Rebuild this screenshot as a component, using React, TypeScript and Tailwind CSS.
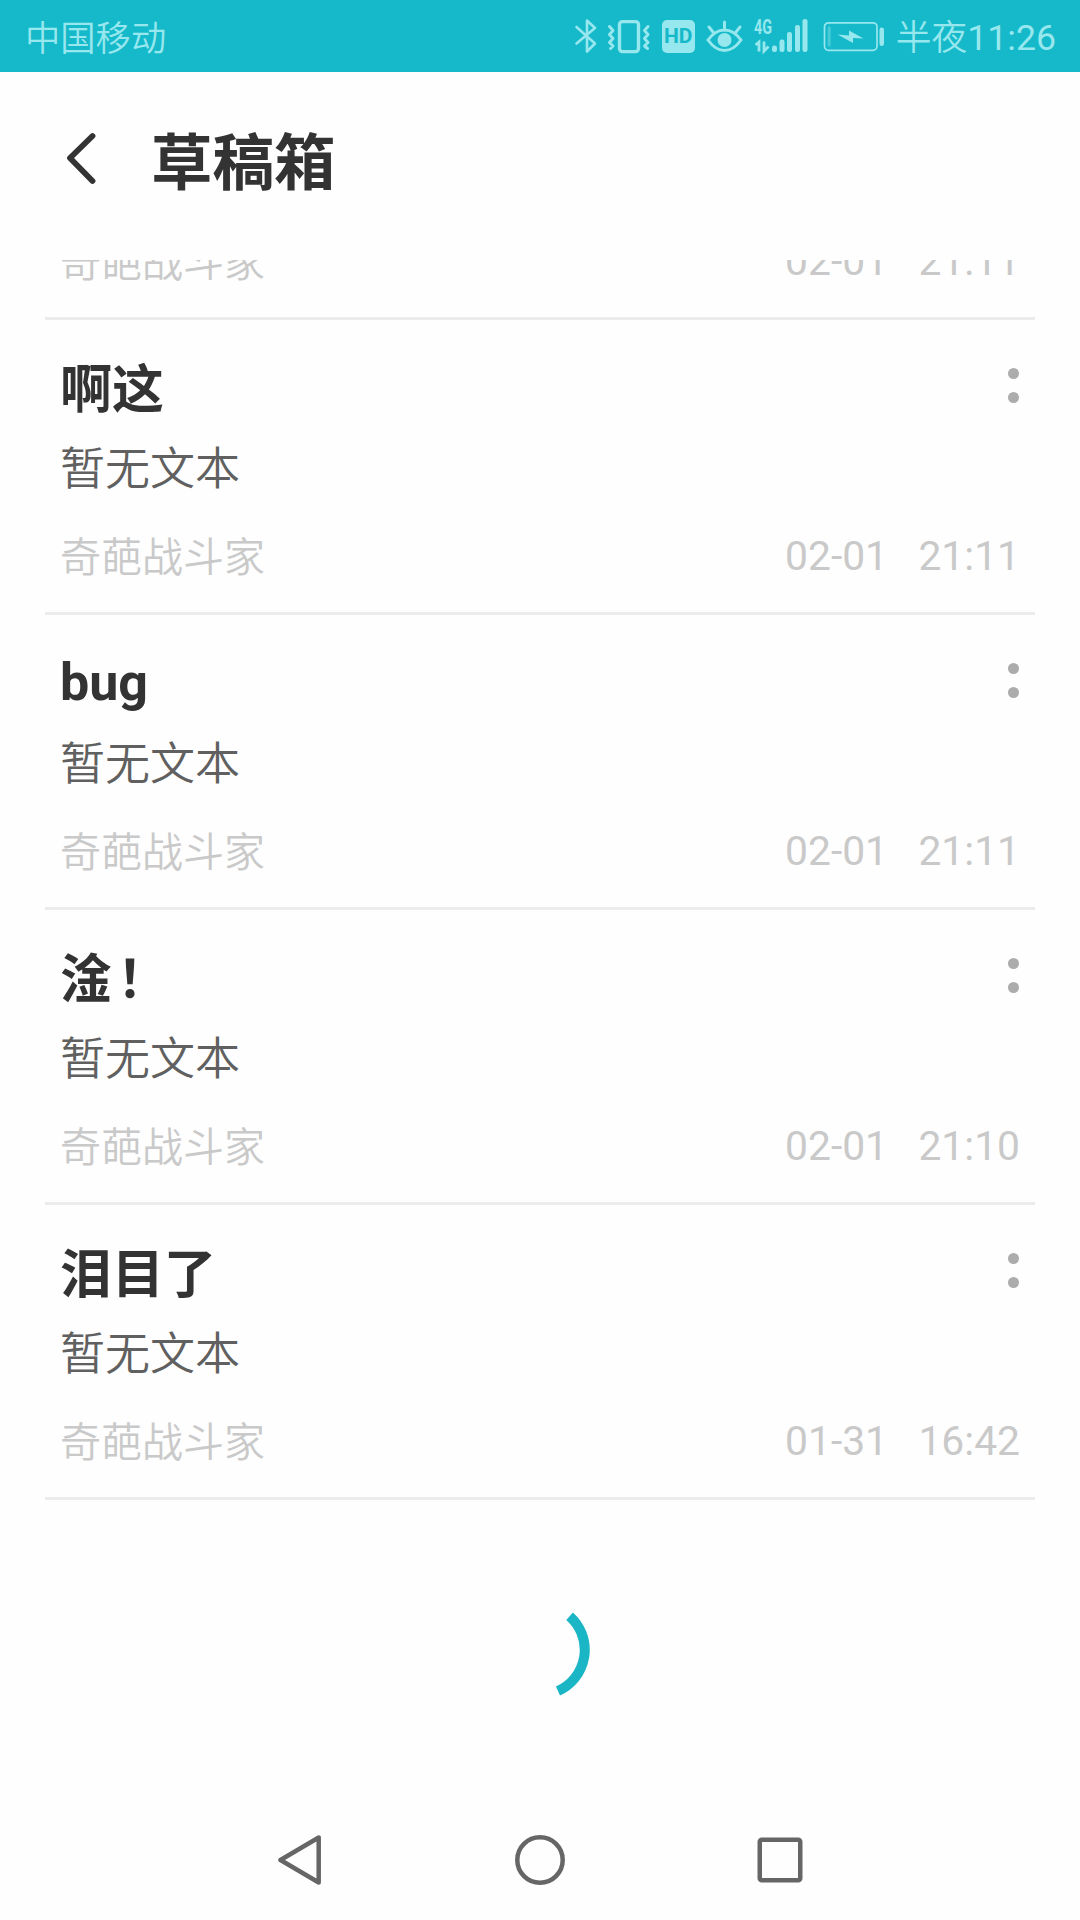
type Draft = {
  id: number;
  title: string;
  mark?: string;
  text: string;
  author: string;
  date: string;
  time: string;
};

const drafts: Draft[] = [
  { id: 1, title: "啊这", text: "暂无文本", author: "奇葩战斗家", date: "02-01", time: "21:11" },
  { id: 2, title: "bug", text: "暂无文本", author: "奇葩战斗家", date: "02-01", time: "21:11" },
  { id: 3, title: "淦", mark: "！", text: "暂无文本", author: "奇葩战斗家", date: "02-01", time: "21:10" },
  { id: 4, title: "泪目了", text: "暂无文本", author: "奇葩战斗家", date: "01-31", time: "16:42" },
];

function StatusIcons() {
  return (
    <div className="flex items-center text-[#97e7ee]">
      {/* Bluetooth */}
      <svg className="w-[24px] h-[40px]" viewBox="0 0 24 40" fill="none" stroke="currentColor" strokeWidth="2.600" strokeLinejoin="round" strokeLinecap="round">
        <path d="M2.500 11 21 27.500 13 35.500V4.500L21 12 2.500 27.500" />
      </svg>
      {/* Vibrate */}
      <svg className="ml-[9px] w-[44px] h-[40px]" viewBox="0 0 44 40" fill="none" stroke="currentColor" strokeLinejoin="round" strokeLinecap="round">
        <rect x="12.500" y="5.600" width="19" height="30" rx="3" strokeWidth="3.400" />
        <path d="M2.500 10.500 6 14.500 2.500 18.500 6 22.500 2.500 26.500 6 30 3.500 32.500M41 10.500 37.500 14.500 41 18.500 37.500 22.500 41 26.500 37.500 30 40.500 32.500" strokeWidth="3" />
      </svg>
      {/* HD */}
      <span className="ml-[11px] flex h-[33px] w-[33px] items-center justify-center rounded-[5px] bg-[#97e7ee] text-[21px] leading-none font-bold text-[#15b9c9]">
        HD
      </span>
      {/* Eye comfort */}
      <svg className="ml-[10px] w-[38px] h-[40px]" viewBox="0 0 38 40" fill="none" stroke="currentColor" strokeWidth="3" strokeLinecap="round">
        <path d="M3 24C8 17 13 14 19.500 14S31 17 36 24C31 31 26 34.500 19.500 34.500S8 31 3 24Z" />
        <path d="M19.500 14V6M8 16 4 11M31 16 35 11" />
        <circle cx="19.500" cy="24" r="7" fill="currentColor" stroke="none" />
      </svg>
      {/* Mobile signal */}
      <svg className="ml-[11px] w-[54px] h-[40px]" viewBox="0 0 54 40" fill="currentColor">
        <text x="0" y="17.500" fontSize="20" fontWeight="700" textLength="18" lengthAdjust="spacingAndGlyphs">4G</text>
        <path d="M1.500 29 5 26V35.500M10 25.500V35L14.500 30.500" fill="none" stroke="currentColor" strokeWidth="2.800" />
        <rect x="18" y="29.500" width="5" height="6.500" rx="2.200" />
        <rect x="25.500" y="23.500" width="5" height="12.500" rx="2.200" />
        <rect x="33" y="16" width="5" height="20" rx="2.200" />
        <rect x="41" y="9" width="5" height="27" rx="2.200" />
        <rect x="48.500" y="3" width="5" height="33" rx="2.200" />
      </svg>
      {/* Battery, charging */}
      <svg className="ml-[15px] w-[62px] h-[40px]" viewBox="0 0 62 40" fill="currentColor">
        <rect x="1.500" y="6.800" width="52.500" height="27.500" rx="4" fill="none" stroke="currentColor" strokeWidth="1.700" />
        <rect x="4.700" y="10.500" width="3" height="20" rx="1.200" opacity=".4" />
        <path d="M14.500 18.500 26 19.500V14.500L40.500 22.500 30 22V27Z" />
        <rect x="56.500" y="11.500" width="4.500" height="18.500" rx="2.200" />
      </svg>
    </div>
  );
}

function DraftMeta({ author, date, time }: Pick<Draft, "author" | "date" | "time">) {
  return (
    <div className="flex h-[48px] shrink-0 items-start justify-between text-[41px] leading-[48px] text-[#c9c9c9]">
      <span className="pt-[2px] font-[350]">{author}</span>
      <span className="text-[40.800px] whitespace-pre">{`${date}   ${time}`}</span>
    </div>
  );
}

function DraftRow({ draft }: { draft: Draft }) {
  const isLatin = /^[\x20-\x7e]+$/.test(draft.title);

  return (
    <li className="h-[295px] border-b-[3px] border-[#ececec] px-[15px] pt-[38px]">
      <div className="flex h-[60px] justify-between">
        <h2 className={`text-[52px] leading-[60px] font-bold text-[#333] ${isLatin ? "" : "pt-[3px]"}`}>
          {draft.title}
          {draft.mark && <span className="pl-[5px]">{draft.mark}</span>}
        </h2>
        <button aria-label="更多" className="mr-[1px] flex flex-col gap-[13px] pt-[10px]">
          <i className="h-[11px] w-[11px] rounded-full bg-[#acacac]" />
          <i className="h-[11px] w-[11px] rounded-full bg-[#acacac]" />
        </button>
      </div>
      <p className="mt-[25px] mb-[35px] h-[54px] text-[45px] leading-[54px] font-[350] text-[#606060]">{draft.text}</p>
      <DraftMeta author={draft.author} date={draft.date} time={draft.time} />
    </li>
  );
}

export default function App() {
  return (
    <div className="flex h-[1920px] w-[1080px] flex-col overflow-hidden bg-[#fefefe] font-[Roboto,'Noto_Sans_CJK_SC',sans-serif]">
      <div className="flex h-[72px] shrink-0 items-center justify-between bg-[#15b9c9] pr-[24px] pl-[25px] text-[35.700px] leading-[42px] text-[#97e7ee]">
        <span className="pt-[5px] text-[35.300px] font-[350]">中国移动</span>
        <div className="flex items-center gap-[11px]">
          <StatusIcons />
          <span className="pt-[4px]">
            <span className="font-[350]">半夜</span>11:26
          </span>
        </div>
      </div>

      <header className="flex h-[188px] shrink-0 items-center pb-[14px] pl-[65px]">
        <button aria-label="返回">
          <svg className="w-[32px] h-[54px]" viewBox="0 0 32 54" fill="none" stroke="#333" strokeWidth="5.800" strokeLinecap="round" strokeLinejoin="round">
            <path d="M27.500 4 5 26 27.500 49" />
          </svg>
        </button>
        <h1 className="ml-[54px] pt-[9px] text-[61.500px] leading-[72px] font-bold text-[#333]">草稿箱</h1>
      </header>

      <main className="flex flex-1 flex-col overflow-hidden px-[45px]">
        {/* row scrolled halfway under the header */}
        <div className="flex h-[60px] shrink-0 flex-col justify-end border-b-[3px] border-[#ececec] px-[15px] pb-[32px]">
          <DraftMeta author="奇葩战斗家" date="02-01" time="21:11" />
        </div>
        <ul>
          {drafts.map((d) => (
            <DraftRow key={d.id} draft={d} />
          ))}
        </ul>
        <div className="flex flex-1 justify-center pt-[100px]">
          <svg className="w-[100px] h-[100px]" viewBox="0 0 100 100" fill="none" stroke="#1bb6c6" strokeWidth="10">
            <path d="M79.600 16.200A45 45 0 0 1 68 91" />
          </svg>
        </div>
      </main>

      <nav className="flex h-[120px] shrink-0 items-center justify-center gap-[190px]">
        <svg className="w-[50px] h-[50px]" viewBox="0 0 50 50" fill="none" stroke="#666" strokeWidth="4.500" strokeLinejoin="round">
          <path d="M43.700 2.500V47.500L5.500 25Z" />
        </svg>
        <svg className="w-[50px] h-[50px]" viewBox="0 0 50 50" fill="none" stroke="#666" strokeWidth="4.500">
          <circle cx="25" cy="25" r="22.700" />
        </svg>
        <svg className="w-[50px] h-[50px]" viewBox="0 0 50 50" fill="none" stroke="#666" strokeWidth="4.500">
          <rect x="4.750" y="4.750" width="40.500" height="40.500" rx="2" />
        </svg>
      </nav>
    </div>
  );
}
